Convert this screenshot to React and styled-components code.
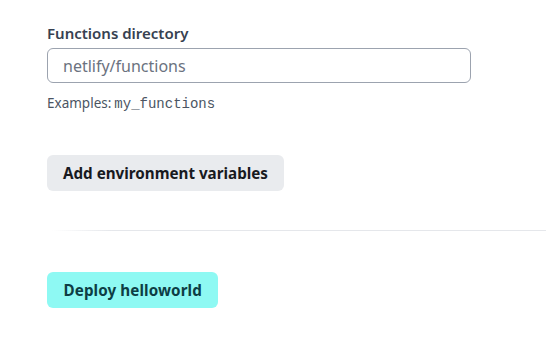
import React from "react";
import styled, { createGlobalStyle } from "styled-components";

const Global = createGlobalStyle`
  html, body { margin: 0; padding: 0; background: #fff; }
  body { font-family: "Noto Sans", "Open Sans", sans-serif; }
`;

const Page = styled.div`
  width: 546px;
  height: 340px;
  overflow: hidden;
  padding: 22px 0 0 47px;
  box-sizing: border-box;
  display: flex;
  flex-direction: column;
`;

const Field = styled.div`
  display: flex;
  flex-direction: column;
  width: 424px;
`;

const Label = styled.label`
  font-size: 15px;
  font-weight: 600;
  color: #374151;
  line-height: 22px;
  margin-bottom: 4px;
`;

const Input = styled.input`
  box-sizing: border-box;
  height: 35px;
  width: 424px;
  border: 1px solid #9ca3af;
  border-radius: 6px;
  padding: 0 15px;
  font-family: inherit;
  font-size: 16px;
  color: #4b5563;
  outline: none;
  &::placeholder { color: #6b7280; }
`;

const Hint = styled.p`
  margin: 11px 0 0;
  font-size: 13.5px;
  line-height: 18px;
  color: #4b5563;
`;

const Code = styled.code`
  font-family: "Liberation Mono", "DejaVu Sans Mono", monospace;
  font-size: 14px;
  margin-left: 3px;
`;

const Button = styled.button`
  align-self: flex-start;
  box-sizing: border-box;
  height: 36px;
  border: none;
  border-radius: 6px;
  padding: 0 ${(p) => (p.$primary ? 16.5 : 16)}px;
  font-family: inherit;
  font-size: 15.2px;
  font-weight: 700;
  letter-spacing: ${(p) => (p.$primary ? "0.1px" : "0")};
  background: ${(p) => (p.$primary ? "#8ef9f3" : "#e9ebee")};
  color: ${(p) => (p.$primary ? "#0d3d44" : "#181a1f")};
  margin-top: ${(p) => p.$mt}px;
  cursor: pointer;
`;

const Divider = styled.hr`
  border: none;
  height: 1px;
  margin: 39px 0 0 5px;
  background: linear-gradient(to right, rgba(229,231,235,0), #e5e7eb 60px);
`;

export default function App() {
  return (
    <>
      <Global />
      <Page>
        <Field>
          <Label htmlFor="fn">Functions directory</Label>
          <Input id="fn" placeholder="netlify/functions" />
          <Hint>
            Examples:<Code>my_functions</Code>
          </Hint>
        </Field>
        <Button $mt={42}>Add environment variables</Button>
        <Divider />
        <Button $primary $mt={41}>Deploy helloworld</Button>
      </Page>
    </>
  );
}
